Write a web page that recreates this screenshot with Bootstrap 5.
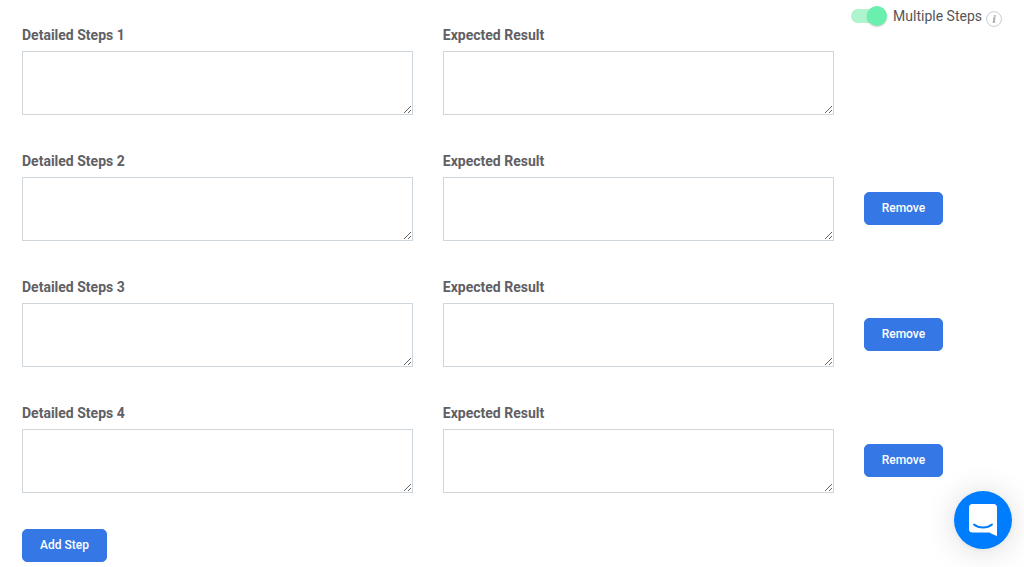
<!DOCTYPE html>
<html lang="en">
<head>
<meta charset="utf-8">
<meta name="viewport" content="width=device-width, initial-scale=1">
<title>Test Case Steps</title>
<link href="https://cdn.jsdelivr.net/npm/bootstrap@5.3.0/dist/css/bootstrap.min.css" rel="stylesheet">
<style>
  body { font-family: Roboto, "Liberation Sans", sans-serif; font-size: 14px; line-height: 20px; color: #555; background: #fff; }
  .steps-form { padding: 0 22px; }
  .steps-head { height: 25px; padding-top: 6px; }
  .step-row { --bs-gutter-x: 30px; margin-bottom: 36px; }
  .step-label { font-weight: 700; margin-bottom: 6px; line-height: 20px; color: #606064; }
  .step-box { display: block; height: 64px; border: 1px solid #cfd6dc; border-radius: 0; font-size: 14px; resize: both; }
  .step-btn { --bs-btn-bg: #3578e5; --bs-btn-border-color: #3578e5; --bs-btn-font-size: 12px; --bs-btn-font-weight: 500; --bs-btn-padding-x: 17px; --bs-btn-padding-y: 6px; --bs-btn-border-radius: 5px; line-height: 19px; }
  .step-action { padding-top: 41px; }
  .multi-switch { appearance: none; width: 36px; height: 20px; margin: 0 6px 0 0; border: 0; position: relative; background: none; }
  .multi-switch::before { content: ""; position: absolute; inset: 3px 2px 3px 0; border-radius: 7px; background: #cfcfcf; }
  .multi-switch::after { content: ""; position: absolute; top: 0; left: 0; width: 20px; height: 20px; border-radius: 50%; background: #f5f5f5; box-shadow: 0 1px 2px rgba(0,0,0,.2); }
  .multi-switch:checked::before { background: #aef5cf; }
  .multi-switch:checked::after { left: 16px; background: #69f0ae; }
  .info-btn { width: 16px; height: 16px; margin: 5px 0 0 4px; }
  .chat-btn { width: 58px; height: 58px; right: 12px; bottom: 18px; background: #007dfc; box-shadow: 0 1px 6px rgba(0,0,0,.06), 0 2px 32px rgba(0,0,0,.14); }
</style>
</head>
<body>
<form class="steps-form container-fluid">
  <div class="steps-head d-flex justify-content-end align-items-start">
    <input class="multi-switch" type="checkbox" role="switch" id="multi" checked>
    <label for="multi">Multiple Steps</label>
    <button type="button" class="info-btn btn p-0 border-0 d-flex" aria-label="Information">
      <svg width="16" height="16" viewBox="0 0 16 16" fill="none" aria-hidden="true"><circle cx="8" cy="8" r="7.4" stroke="#c5ced6"/><circle cx="8.800" cy="5" r="1" fill="#a9aaa8"/><path d="M7 7.200h1.600L7.600 11h1.600" stroke="#a9aaa8" stroke-width="1.600"/></svg>
    </button>
  </div>

  <div class="row step-row">
    <div class="col-5"><label class="step-label d-block" for="step1">Detailed Steps 1</label><textarea class="form-control step-box" id="step1"></textarea></div>
    <div class="col-5"><label class="step-label d-block" for="result1">Expected Result</label><textarea class="form-control step-box" id="result1"></textarea></div>
  </div>
  <div class="row step-row">
    <div class="col-5"><label class="step-label d-block" for="step2">Detailed Steps 2</label><textarea class="form-control step-box" id="step2"></textarea></div>
    <div class="col-5"><label class="step-label d-block" for="result2">Expected Result</label><textarea class="form-control step-box" id="result2"></textarea></div>
    <div class="col-2 step-action"><button type="button" class="btn btn-primary step-btn">Remove</button></div>
  </div>
  <div class="row step-row">
    <div class="col-5"><label class="step-label d-block" for="step3">Detailed Steps 3</label><textarea class="form-control step-box" id="step3"></textarea></div>
    <div class="col-5"><label class="step-label d-block" for="result3">Expected Result</label><textarea class="form-control step-box" id="result3"></textarea></div>
    <div class="col-2 step-action"><button type="button" class="btn btn-primary step-btn">Remove</button></div>
  </div>
  <div class="row step-row">
    <div class="col-5"><label class="step-label d-block" for="step4">Detailed Steps 4</label><textarea class="form-control step-box" id="step4"></textarea></div>
    <div class="col-5"><label class="step-label d-block" for="result4">Expected Result</label><textarea class="form-control step-box" id="result4"></textarea></div>
    <div class="col-2 step-action"><button type="button" class="btn btn-primary step-btn">Remove</button></div>
  </div>

  <button type="button" class="btn btn-primary step-btn">Add Step</button>
</form>

<button type="button" class="chat-btn btn rounded-circle border-0 p-0 position-fixed d-flex align-items-center justify-content-center" aria-label="Open chat">
  <svg width="28" height="32" viewBox="0 0 28 32" aria-hidden="true"><path d="M3.500 0h21A3.500 3.500 0 0 1 28 3.500V32s-4-1.400-7.600-3.500H3.500A3.500 3.500 0 0 1 0 25V3.500A3.500 3.500 0 0 1 3.500 0z" fill="#fff"/><path d="M5 20.500c5 4 13 4 18 0" fill="none" stroke="#007dfc" stroke-width="2" stroke-linecap="round"/></svg>
</button>
<script src="https://cdn.jsdelivr.net/npm/bootstrap@5.3.0/dist/js/bootstrap.bundle.min.js"></script>
</body>
</html>
